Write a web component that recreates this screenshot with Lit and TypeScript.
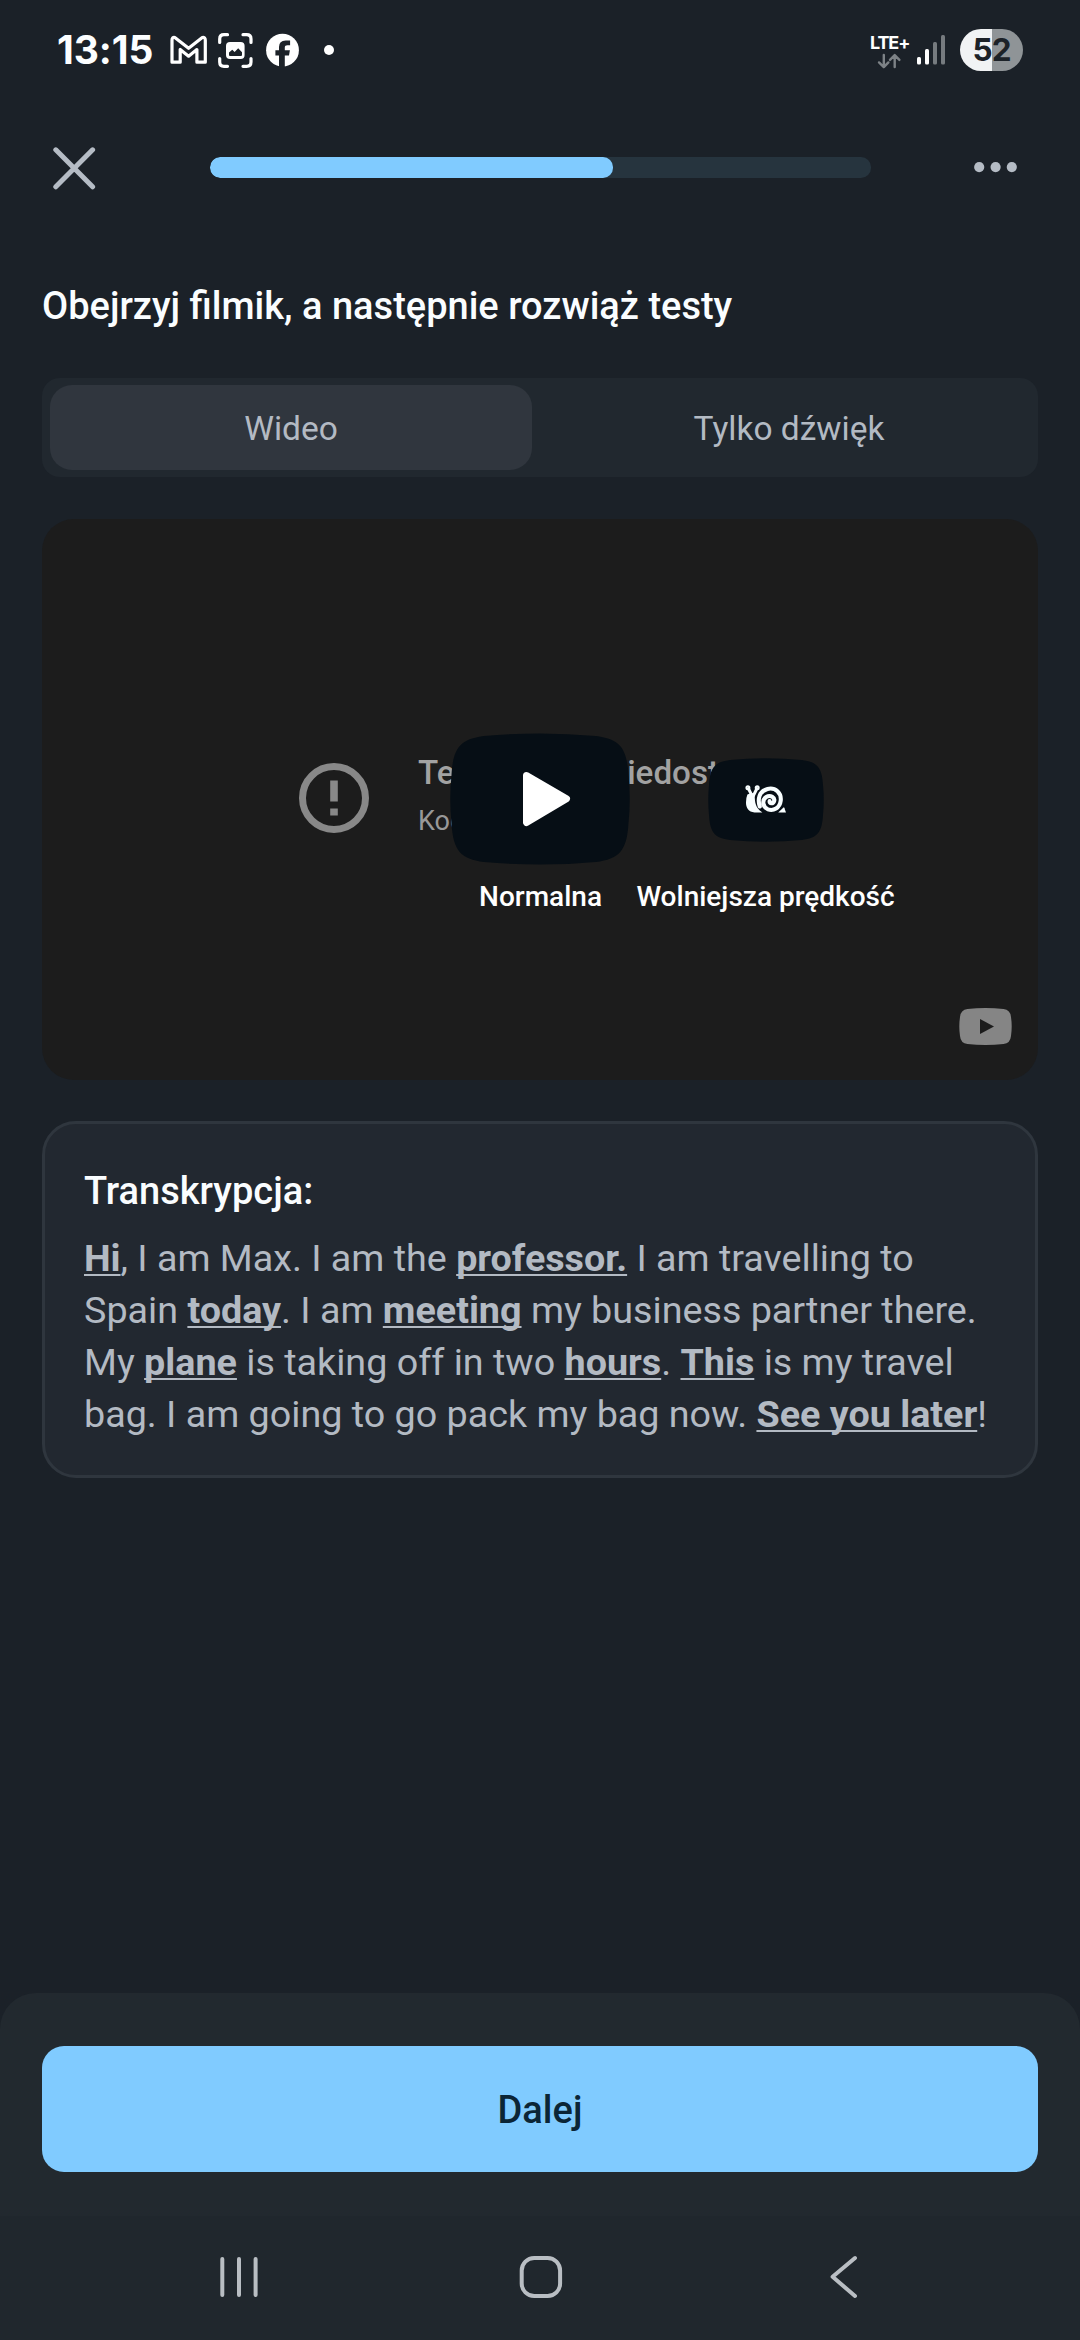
import { LitElement, html, css } from "lit";
import { customElement, property } from "lit/decorators.js";

@customElement("status-bar")
class StatusBar extends LitElement {
  static styles = css`
    :host { display: block; height: 100px; }
    .bar { display: flex; justify-content: space-between; height: 100px; padding: 0 57px 0 57px; box-sizing: border-box; }
    .left, .right { display: flex; align-items: center; height: 100px; }
    .time { width: 97px; font: 700 39px/44px Inter, "Open Sans", sans-serif; color: #fcfeff; letter-spacing: -0.1px; white-space: nowrap; }
    .icons { margin-left: 13px; display: block; }
    .net { display: flex; flex-direction: column; width: 40px; margin-right: 6px; padding-top: 2px; }
    .lte { font: 700 18px/20px Inter, sans-serif; letter-spacing: -1.1px; color: #fff; }
    .battery { display: grid; place-items: center; margin-left: 14px; width: 63px; height: 42px; border-radius: 21px;
      background: linear-gradient(90deg, #f1f3f4 0 51%, #8f9497 51%); font: 700 31.5px/42px Inter, sans-serif; color: #1c2228; letter-spacing: -1px; }
  `;
  render() {
    return html`<div class="bar">
      <div class="left">
        <span class="time">13:15</span>
        <svg class="icons" width="170" height="40" viewBox="167 31 170 40" fill="none">
          <path d="M172 41.3 Q172 38 174.8 38.5 L188.6 49.3 L202.3 38.5 Q205.3 38 205.3 41.3 V63.2 H196.9 V50.5 L188.6 57.2 L180.2 50.5 V63.2 H172 Z" stroke="#fff" stroke-width="3.2" stroke-linejoin="round"/>
          <path d="M219.7 43.5 V40 Q219.7 35.7 224 35.7 H227.5 M243 35.7 H246.6 Q251 35.7 251 40 V43.5 M251 59.5 V63 Q251 67.3 246.6 67.3 H243 M227.5 67.3 H224 Q219.7 67.3 219.7 63 V59.5" stroke="#fff" stroke-width="3.2" stroke-linecap="round"/>
          <rect x="226" y="43" width="18.6" height="17" rx="4" fill="#fff"/>
          <path d="M229 56 V53.6 L232.3 50.7 L234.6 53 L238.2 49.2 L242 53.2 V56 Q242 57 241 57 H230 Q229 57 229 56 Z" fill="#1c2228"/>
          <circle cx="282.5" cy="51.2" r="16.4" fill="#fff"/>
          <path d="M279 69 V56.4 H275.4 V51.2 H279 V48 Q279 41.4 285.7 41.4 H290.1 V46.3 H287.4 Q284.8 46.3 284.8 48.6 V51.2 H289.9 L289 56.4 H284.8 V69 Z" fill="#1c2228"/>
          <circle cx="329" cy="51" r="5" fill="#fff"/>
        </svg>
      </div>
      <div class="right">
        <div class="net">
          <span class="lte">LTE+</span>
          <svg width="40" height="17" viewBox="870 52 40 17" fill="none" stroke="#7d8286" stroke-width="2.4" stroke-linecap="round" stroke-linejoin="round">
            <path d="M883.8 54 V66 M879 61.4 L883.8 66.2 L888.4 61.4 M894.7 66 V54.3 M890 58.9 L894.7 54.1 L899.4 58.9"/>
          </svg>
        </div>
        <svg width="30" height="40" viewBox="916 31 30 40" fill="#fff">
          <rect x="917" y="58" width="4" height="7.4" rx="1.5"/>
          <rect x="925" y="50" width="4" height="15.4" rx="1.5"/>
          <rect x="933" y="43" width="4" height="22.4" rx="1.5" fill="#767b7f"/>
          <rect x="941" y="36" width="4" height="29.4" rx="1.5" fill="#767b7f"/>
        </svg>
        <div class="battery">52</div>
      </div>
    </div>`;
  }
}

@customElement("lesson-header")
class LessonHeader extends LitElement {
  @property({ type: Number }) progress = 61;
  static styles = css`
    :host { display: block; }
    .row { display: flex; align-items: center; height: 43px; padding-left: 52px; margin-top: 46px; }
    .track { width: 661px; height: 21px; margin: 0 103px 0 114px; border-radius: 10px; background: #26343e; overflow: hidden; }
    .fill { height: 21px; border-radius: 10px; background: #80cbff; }
    svg { display: block; }
  `;
  render() {
    return html`<div class="row">
      <svg width="44" height="44" viewBox="0 0 44 44" stroke="#b5bcc5" stroke-width="5" stroke-linecap="round"><path d="M3.8 3.8 L40.6 40.8 M40.6 3.8 L3.8 40.8"/></svg>
      <div class="track"><div class="fill" style="width:${this.progress}%"></div></div>
      <svg width="44" height="44" viewBox="974 145.5 44 44" fill="#b5bcc5"><circle cx="979.2" cy="166.6" r="5.1"/><circle cx="995.6" cy="166.6" r="5.1"/><circle cx="1011.8" cy="166.6" r="5.1"/></svg>
    </div>`;
  }
}

@customElement("video-panel")
class VideoPanel extends LitElement {
  static styles = css`
    :host { display: block; }
    .video { position: relative; height: 561px; border-radius: 32px; background: #1c1c1c; overflow: hidden; font-family: Roboto, sans-serif; }
    .error { position: absolute; left: 257px; top: 221px; display: flex; }
    .ring { margin-top: 23px; }
    .msg { margin-left: 49px; white-space: nowrap; }
    .t1 { font-size: 33.2px; line-height: 48px; font-weight: 500; color: #a2a2a2; padding-top: 9px; }
    .t2 { font-size: 27px; line-height: 48px; color: #989898; }
    .big { position: absolute; left: 408px; top: 214px; }
    .small { position: absolute; left: 666px; top: 239px; }
    .label { position: absolute; top: 361px; font-size: 28px; line-height: 34px; font-weight: 500; color: #fff; white-space: nowrap; transform: translateX(-50%); }
    .normal { left: 498.5px; }
    .slow { left: 723.5px; }
    .yt { position: absolute; left: 917px; top: 489px; }
  `;
  render() {
    return html`<div class="video">
      <div class="error">
        <svg class="ring" width="70" height="70" viewBox="0 0 70 70" fill="#888"><circle cx="35" cy="35" r="31.5" fill="none" stroke="#888" stroke-width="7"/><rect x="31.2" y="17.5" width="7.6" height="21"/><rect x="31.2" y="45.5" width="7.6" height="7"/></svg>
        <div class="msg"><div class="t1">Ten film jest niedostępny</div><div class="t2">Kod błędu: 4</div></div>
      </div>
      <svg class="big" width="180" height="132" viewBox="0 0 180 132">
        <path d="M1.5 42 C3 14 11 6 34 3 Q90 -2 146 3 C169 6 177 14 178.5 42 Q181 66 178.5 90 C177 118 169 126 146 129 Q90 134 34 129 C11 126 3 118 1.5 90 Q-1 66 1.5 42 Z" fill="#060e15"/>
        <path d="M76.5 42.5 L116.5 65.8 L76.5 89.5 Z" fill="#fff" stroke="#fff" stroke-width="7" stroke-linejoin="round"/>
      </svg>
      <svg class="small" width="116" height="84" viewBox="0 0 116 84">
        <path d="M1 27 C2 9 7 4 22 2 Q58 -1.5 94 2 C109 4 114 9 115 27 Q116.5 42 115 57 C114 75 109 80 94 82 Q58 85.5 22 82 C7 80 2 75 1 57 Q-0.5 42 1 27 Z" fill="#060e15"/>
        <g fill="none" stroke="#f8feff" stroke-linecap="round">
          <path d="M40.4 30.5 L44.2 38.2 M48.9 30.5 L45.2 38.2" stroke-width="3"/>
          <circle cx="39.9" cy="29.8" r="1" stroke-width="3"/><circle cx="49.2" cy="29.8" r="1" stroke-width="3"/>
          <path d="M39.4 36.5 Q46 33 46.6 37.5 C47.1 44 46.7 49 54.4 54.4 H46.5 C40.6 54 37.8 49.6 38 44.2 Q38 40 39.4 36.5 Z" fill="#f8feff" stroke="none"/>
          <path d="M51.8 48.5 C49.4 41.5 51 33 59.5 30.9 C67.5 29 73.7 35 72.7 42.8 C71.8 50 65.4 53.4 60 51.4 C54.8 49.3 53.5 42.2 58.2 39 C62.4 36.4 67.5 39.6 66 43.5 C65 46 61.5 45.8 61.6 43.1" stroke-width="4.1"/>
          <path d="M70.2 54.4 L75.8 49.2 Q76.8 49.8 76.8 51.2 L78 54.4 Z" fill="#f8feff" stroke="none"/>
        </g>
      </svg>
      <span class="label normal">Normalna</span>
      <span class="label slow">Wolniejsza prędkość</span>
      <svg class="yt" width="53" height="37" viewBox="0 0 53 37"><path d="M1 9 Q1.6 1.8 8.5 1 Q26.5 -0.8 44.5 1 Q51.4 1.8 52 9 Q53.4 18.5 52 28 Q51.4 35.2 44.5 36 Q26.5 37.8 8.5 36 Q1.6 35.2 1 28 Q-0.4 18.5 1 9 Z" fill="#858585"/><path d="M21 11 L35 18.5 L21 26 Z" fill="#1c1c1c"/></svg>
    </div>`;
  }
}

@customElement("transcript-card")
class TranscriptCard extends LitElement {
  static styles = css`
    :host { display: block; }
    .card { box-sizing: border-box; height: 357px; border: 3px solid #2f363e; border-radius: 34px; background: #222830; padding: 41px 0 0 39px; font-family: Roboto, sans-serif; font-size: 37.7px; color: #b3bac3; }
    .heading { font-size: 38px; line-height: 52px; font-weight: 500; color: #fafdff; margin-bottom: 15px; }
    .line { line-height: 52.1px; white-space: nowrap; }
    .word { font-weight: 700; text-decoration: underline; text-decoration-thickness: 2px; text-underline-offset: 3px; text-decoration-skip-ink: none; }
  `;
  render() {
    const w = (t: string) => html`<span class="word">${t}</span>`;
    return html`<div class="card">
      <div class="heading">Transkrypcja:</div>
      <div class="line">${w("Hi")}, I am Max. I am the ${w("professor.")} I am travelling to</div>
      <div class="line">Spain ${w("today")}. I am ${w("meeting")} my business partner there.</div>
      <div class="line">My ${w("plane")} is taking off in two ${w("hours")}. ${w("This")} is my travel</div>
      <div class="line">bag. I am going to go pack my bag now. ${w("See you later")}!</div>
    </div>`;
  }
}

@customElement("app-root")
class AppRoot extends LitElement {
  static styles = css`
    :host { display: block; width: 1080px; height: 2340px; background: #1b2128; font-family: Roboto, sans-serif; overflow: hidden; }
    .page { display: flex; flex-direction: column; height: 2340px; }
    .content { display: flex; flex-direction: column; padding: 93px 42px 0; flex: 1; }
    .title { font-size: 38px; line-height: 48px; font-weight: 500; color: #fafdff; white-space: nowrap; }
    .tabs { display: grid; grid-template-columns: 482px 482px; justify-content: space-between; height: 99px; margin-top: 48px; box-sizing: border-box; padding: 7px 8px; border-radius: 18px; background: #21282f; }
    .tab { display: grid; place-items: center; height: 85px; box-sizing: border-box; padding-top: 2px; border-radius: 22px; font-size: 33.5px; line-height: 40px; color: #b3bac3; }
    .active { background: #30363e; }
    .panel { margin-top: 42px; }
    .card { margin-top: 41px; }
    .sheet { height: 223px; box-sizing: border-box; padding: 53px 42px 0; background: #22292f; border-radius: 36px 36px 0 0; }
    .next { display: grid; place-items: center; height: 126px; box-sizing: border-box; padding-top: 2px; border-radius: 22px; background: #80cbff; color: #0b2536; font-size: 38px; font-weight: 500; }
    .nav { height: 124px; background: #20272d; }
    svg { display: block; }
  `;
  render() {
    return html`<div class="page">
      <status-bar></status-bar>
      <lesson-header .progress=${61}></lesson-header>
      <main class="content">
        <div class="title">Obejrzyj filmik, a następnie rozwiąż testy</div>
        <div class="tabs"><div class="tab active">Wideo</div><div class="tab">Tylko dźwięk</div></div>
        <video-panel class="panel"></video-panel>
        <transcript-card class="card"></transcript-card>
      </main>
      <div class="sheet"><div class="next">Dalej</div></div>
      <div class="nav">
        <svg width="1080" height="124" viewBox="0 2216 1080 124" fill="none" stroke="#b9bec3" stroke-width="4" stroke-linecap="round" stroke-linejoin="round">
          <path d="M222.3 2259 V2295 M239 2259 V2295 M255.6 2259 V2295"/>
          <rect x="521.7" y="2258" width="38.4" height="38" rx="12.5"/>
          <path d="M855 2258 L832.6 2276.8 L855 2296"/>
        </svg>
      </div>
    </div>`;
  }
}
